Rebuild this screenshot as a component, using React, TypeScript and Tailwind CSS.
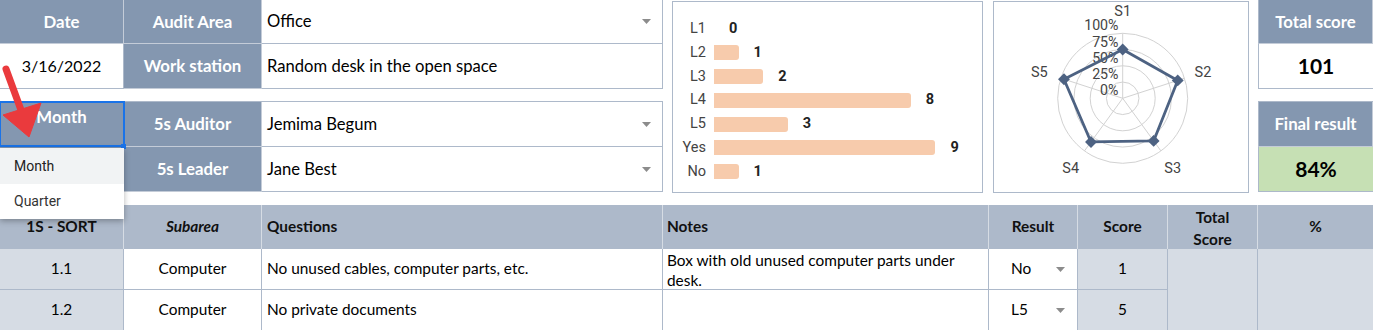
import React from 'react';

const calibri = "font-['Lato','Liberation_Sans',sans-serif]";
const roboto = "font-['Roboto','Liberation_Sans',sans-serif]";
const hdr = 'bg-[#8497b0] text-white font-bold text-[16.8px] flex items-center justify-center border-r border-b border-[#c4ccd8]';

const bars: [string, number][] = [
  ['L1', 0],
  ['L2', 1],
  ['L3', 2],
  ['L4', 8],
  ['L5', 3],
  ['Yes', 9],
  ['No', 1],
];

const Caret = () => (
  <svg width="9" height="5" viewBox="0 0 9 5" className="shrink-0">
    <path d="M0 0H9L4.5 5Z" fill="#8c8c8c" />
  </svg>
);

const ValueCell = ({ text, dropdown }: { text: string; dropdown?: boolean }) => (
  <div className="flex-1 flex items-center justify-between pl-[5px] pr-[11px] border-r border-b border-[#adb9ca] text-black text-[16.6px]">
    <span>{text}</span>
    {dropdown && <Caret />}
  </div>
);

const BarChart = () => (
  <div className={`mt-px w-[311px] h-[192px] border border-[#adb9ca] pt-[15px] ${roboto} text-[14.5px]`}>
    {bars.map(([label, v]) => (
      <div key={label} className="flex items-center h-[23.8px]">
        <span className="w-[33px] text-right text-[#444]">{label}</span>
        <div className="ml-2 h-[15px] rounded-r-[3px] bg-[#f7cbac]" style={{ width: v * 24.6 }} />
        <span className="ml-[15px] font-bold text-[#222]">{v}</span>
      </div>
    ))}
  </div>
);

const Radar = () => {
  const cx = 128.7;
  const cy = 96.3;
  const R = 65;
  const vals = [0.75, 0.89, 0.81, 0.83, 0.95];
  const pt = (i: number, k: number) => {
    const a = ((-90 + 72 * i) * Math.PI) / 180;
    return [cx + R * k * Math.cos(a), cy + R * k * Math.sin(a)];
  };
  const poly = vals.map((v, i) => pt(i, v).join(',')).join(' ');
  const labels: [string, number, number][] = [
    ['S1', 128.7, 9],
    ['S2', 209, 70],
    ['S3', 178.7, 166],
    ['S4', 76.7, 166],
    ['S5', 45.3, 70],
  ];
  return (
    <div className={`mt-px w-[256px] h-[192px] border border-[#adb9ca] ${roboto}`}>
      <svg width="254" height="190" viewBox="0 0 254 190">
        {[0.25, 0.5, 0.75, 1].map((k) => (
          <circle key={k} cx={cx} cy={cy} r={R * k} fill="none" stroke="#d2d2d2" strokeWidth="1" />
        ))}
        {vals.map((_, i) => {
          const [x, y] = pt(i, 1);
          return <line key={i} x1={cx} y1={cy} x2={x} y2={y} stroke="#d2d2d2" strokeWidth="1" />;
        })}
        {[1, 0.75, 0.5, 0.25, 0].map((k) => (
          <text key={k} x="124.5" y={cy - R * k - 8} textAnchor="end" dominantBaseline="central" fontSize="14.2" fill="#444">
            {k * 100}%
          </text>
        ))}
        <polygon points={poly} fill="none" stroke="#4d6282" strokeWidth="2.8" strokeLinejoin="round" />
        {vals.map((v, i) => {
          const [x, y] = pt(i, v);
          return <rect key={i} x={x - 4.2} y={y - 4.2} width="8.4" height="8.4" fill="#4d6282" transform={`rotate(45 ${x} ${y})`} />;
        })}
        {labels.map(([t, x, y]) => (
          <text key={t} x={x} y={y} textAnchor="middle" dominantBaseline="central" fontSize="14.5" fill="#444">
            {t}
          </text>
        ))}
      </svg>
    </div>
  );
};

const App: React.FC = () => {
  const th = 'bg-[#adb9ca] text-[#111] font-bold flex items-center border-r border-[#d6dce4]';
  const td = 'border-r border-b border-[#adb9ca] flex items-center';
  return (
    <div className={`relative w-[1373px] h-[330px] overflow-hidden bg-white ${calibri} text-[16px]`}>
      {/* top section */}
      <div className="flex h-[205px]">
        <div className="w-[663px] flex flex-col">
          <div className="flex h-[44px]">
            <div className={`w-[124px] ${hdr}`}>Date</div>
            <div className={`w-[138px] ${hdr}`}>Audit Area</div>
            <ValueCell text="Office" dropdown />
          </div>
          <div className="flex h-[45px]">
            <div className="w-[124px] flex items-center justify-center border-r border-b border-[#adb9ca] text-black">3/16/2022</div>
            <div className={`w-[138px] ${hdr}`}>Work station</div>
            <ValueCell text="Random desk in the open space" />
          </div>
          <div className="h-[13px] border-b border-[#adb9ca]" />
          <div className="flex h-[45px]">
            <div className={`relative w-[124px] ${hdr} !items-start pt-[2px]`}>
              Month
              <div className="absolute -left-px -top-px w-[126px] h-[46px] border-2 border-[#1a73e8]" />
              <div className="absolute -right-[3px] -bottom-[3px] w-[5px] h-[5px] bg-[#1a73e8]" />
            </div>
            <div className={`w-[138px] ${hdr}`}>5s Auditor</div>
            <ValueCell text="Jemima Begum" dropdown />
          </div>
          <div className="flex h-[45px]">
            <div className={`w-[124px] ${hdr}`} />
            <div className={`w-[138px] ${hdr}`}>5s Leader</div>
            <ValueCell text="Jane Best" dropdown />
          </div>
        </div>
        <div className="w-[9px]" />
        <BarChart />
        <div className="w-[10px]" />
        <Radar />
        <div className="w-[9px]" />
        <div className="w-[115px] flex flex-col">
          <div className={`h-[44px] ${hdr} border-l border-l-[#adb9ca]`}>Total score</div>
          <div className="h-[45px] flex items-center justify-center border-l border-b border-[#adb9ca] text-[21px] font-bold text-black">101</div>
          <div className="h-[13px] border-b border-[#adb9ca]" />
          <div className={`h-[45px] ${hdr} border-l border-l-[#adb9ca]`}>Final result</div>
          <div className="h-[45px] flex items-center justify-center bg-[#c6e0b4] border-l border-b border-[#adb9ca] text-[21px] font-bold text-black">84%</div>
        </div>
      </div>

      {/* audit table */}
      <div className="grid grid-cols-[124px_138px_401px_326px_89px_90px_90px_115px] grid-rows-[44px_41px_41px] text-[15.4px]">
        <div className={`${th} justify-center`}>1S - SORT</div>
        <div className={`${th} justify-center italic`}>Subarea</div>
        <div className={`${th} pl-[5px]`}>Questions</div>
        <div className={`${th} pl-[4px]`}>Notes</div>
        <div className={`${th} justify-center`}>Result</div>
        <div className={`${th} justify-center`}>Score</div>
        <div className={`${th} justify-center text-center leading-[22px] pt-[2px]`}>
          Total
          <br />
          Score
        </div>
        <div className={`${th} justify-center border-r-0`}>%</div>

        <div className={`${td} justify-center bg-[#d6dce4]`}>1.1</div>
        <div className={`${td} justify-center`}>Computer</div>
        <div className={`${td} pl-[5px]`}>No unused cables, computer parts, etc.</div>
        <div className={`${td} !items-start pl-[4px] pr-[8px] pt-[1px] leading-[20px]`}>Box with old unused computer parts under desk.</div>
        <div className={`${td} justify-between pl-[22px] pr-[12px]`}>
          <span>No</span>
          <Caret />
        </div>
        <div className={`${td} justify-center bg-[#d6dce4]`}>1</div>
        <div className="row-span-2 bg-[#d6dce4] border-r border-[#adb9ca]" />
        <div className="row-span-2 bg-[#d6dce4]" />

        <div className={`${td} justify-center bg-[#d6dce4]`}>1.2</div>
        <div className={`${td} justify-center`}>Computer</div>
        <div className={`${td} pl-[5px]`}>No private documents</div>
        <div className={td} />
        <div className={`${td} justify-between pl-[22px] pr-[12px]`}>
          <span>L5</span>
          <Caret />
        </div>
        <div className={`${td} justify-center bg-[#d6dce4]`}>5</div>
      </div>

      {/* dropdown menu over the sheet */}
      <div className={`absolute left-0 top-[148px] w-[124px] bg-white shadow-[0_2px_6px_rgba(0,0,0,0.3)] ${roboto} text-[14px]`}>
        <div className="h-[36px] flex items-center pl-[14px] bg-[#f1f3f4] text-[#222]">Month</div>
        <div className="h-[35px] flex items-center pl-[14px] text-[#333]">Quarter</div>
      </div>

      {/* red pointer arrow */}
      <svg className="absolute left-0 top-[60px]" width="50" height="85" viewBox="0 60 50 85">
        <line x1="6" y1="69" x2="21" y2="110" stroke="#ea3a3d" strokeWidth="7" strokeLinecap="round" />
        <polygon points="3,115 41,103 29,137" fill="#ea3a3d" strokeLinejoin="round" stroke="#ea3a3d" strokeWidth="1" />
      </svg>
    </div>
  );
};

export default App;
